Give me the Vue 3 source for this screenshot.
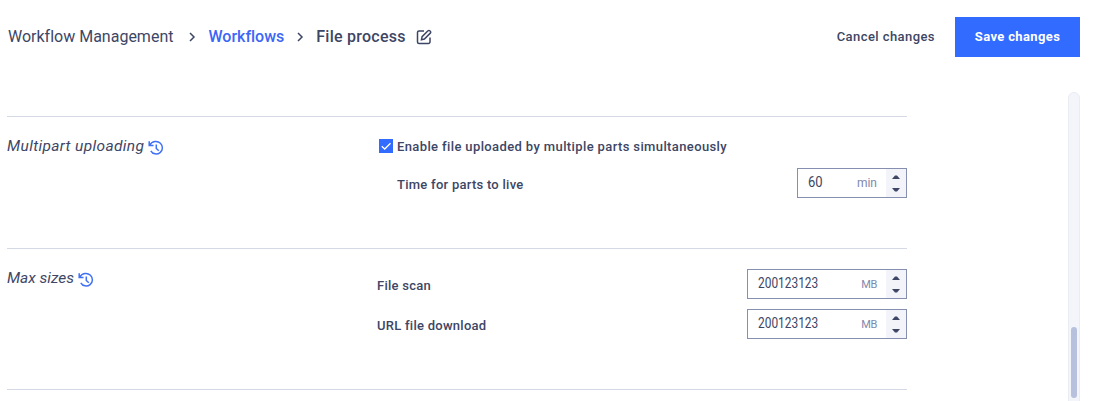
<template>
  <div class="page">
    <header class="header">
      <nav class="breadcrumbs">
        <span class="crumb">Workflow Management</span>
        <svg class="chevron" viewBox="0 0 8 10"><path d="M2 1l4 4-4 4" /></svg>
        <a class="crumb crumb-link" href="#">Workflows</a>
        <svg class="chevron" viewBox="0 0 8 10"><path d="M2 1l4 4-4 4" /></svg>
        <span class="crumb crumb-current">File process</span>
        <svg class="edit-icon" viewBox="0 0 16 16">
          <path d="M8 2H3a1.500 1.500 0 0 0-1.500 1.500v9.500A1.500 1.500 0 0 0 3 14.500h9.500A1.500 1.500 0 0 0 14 13V8.500" />
          <path d="M5.500 10.700l.6-3L12 1.800a1.300 1.300 0 0 1 1.900 0l.4.4a1.300 1.300 0 0 1 0 1.900L8.400 10z" />
        </svg>
      </nav>
      <button class="cancel-button">Cancel changes</button>
      <button class="save-button">Save changes</button>
    </header>

    <main class="content">
      <div class="sections">
        <section v-for="section in sections" :key="section.title" class="section" :class="section.name">
          <h2 class="section-title">
            <span>{{ section.title }}</span>
            <svg class="history-icon" viewBox="0 0 16 16">
              <path d="M1.500 5.600C4 .6 9.600.7 12.400 3.200a6.200 6.200 0 1 1-9.600 7.600" />
              <path d="M1.200 1.300v4.300h4.300" />
              <path d="M8.300 4.500v4l2.500 2.200" />
            </svg>
          </h2>
          <div class="fields">
            <label v-if="section.toggle" class="checkbox-row">
              <span class="checkbox">
                <svg viewBox="0 0 14 14"><path d="M2.800 7.200l2.900 2.800L11.500 4.200" /></svg>
              </span>
              <span class="toggle-label">{{ section.toggle }}</span>
            </label>
            <div v-for="field in section.fields" :key="field.label" class="field">
              <span class="field-label">{{ field.label }}</span>
              <div class="number-input">
                <span class="value">{{ field.value }}</span>
                <span class="unit">{{ field.unit }}</span>
                <span class="spinner">
                  <svg viewBox="0 0 8 4" @click="field.value++"><path d="M0 4l3-3.500h2L8 4z" /></svg>
                  <svg viewBox="0 0 8 4" @click="field.value--"><path d="M0 0l3 3.500h2L8 0z" /></svg>
                </span>
              </div>
            </div>
          </div>
        </section>
        <hr class="end-line" />
      </div>
      <div class="scrollbar"><div class="thumb"></div></div>
    </main>
  </div>
</template>

<script setup>
import { ref } from 'vue';

const sections = ref([
  {
    name: 'multipart',
    title: 'Multipart uploading',
    toggle: 'Enable file uploaded by multiple parts simultaneously',
    fields: [{ label: 'Time for parts to live', value: 60, unit: 'min' }],
  },
  {
    name: 'sizes',
    title: 'Max sizes',
    fields: [
      { label: 'File scan', value: 200123123, unit: 'MB' },
      { label: 'URL file download', value: 200123123, unit: 'MB' },
    ],
  },
]);
</script>

<style>
body {
  overflow: hidden;
  background: #fff;
}
</style>

<style scoped>
.page {
  box-sizing: border-box;
  display: flex;
  flex-direction: column;
  width: 1093px;
  height: 401px;
  overflow: hidden;
  color: #3d4665;
  font-family: Roboto, "Liberation Sans", sans-serif;
  font-size: 13px;
}

svg {
  flex: none;
  fill: none;
  stroke: currentColor;
}

.header {
  display: flex;
  flex: none;
  align-items: center;
  height: 40px;
  padding: 17px 13px 0 8px;
}

.breadcrumbs {
  display: flex;
  flex: 1;
  align-items: center;
  font-size: 16px;
  font-variant-ligatures: none;
  line-height: 20px;
  white-space: nowrap;
}

.crumb-link {
  color: #3c66f5;
  font-weight: 500;
  text-decoration: none;
}

.crumb-current {
  font-weight: 500;
  letter-spacing: 0.25px;
}

.chevron {
  width: 8px;
  height: 10px;
  margin: 0 12px 0 15px;
  stroke-width: 1.5;
}

.crumb-link + .chevron {
  margin-left: 12px;
}

.edit-icon {
  width: 16px;
  height: 16px;
  margin-left: 10px;
  stroke-width: 1.5;
}

button {
  height: 40px;
  padding: 0;
  border: none;
  background: none;
  color: inherit;
  font: 500 13px/40px Roboto, "Liberation Sans", sans-serif;
  white-space: nowrap;
  cursor: pointer;
}

.cancel-button {
  margin-right: 20px;
  letter-spacing: 0.43px;
}

.save-button {
  width: 125px;
  background: #316bff;
  color: #fff;
  font-weight: 700;
  letter-spacing: 0.36px;
}

.content {
  display: flex;
  flex: 1;
  justify-content: space-between;
  padding: 35px 13px 0 7px;
}

.sections {
  width: 900px;
  padding-top: 24px;
}

.section {
  box-sizing: border-box;
  display: flex;
  border-top: 1px solid #d5d8e5;
}

.multipart {
  height: 132px;
}

.sizes {
  height: 141px;
}

.section-title {
  display: flex;
  width: 370px;
  height: 20px;
  margin: 19px 0 0;
  font-size: 15.5px;
  font-style: italic;
  font-weight: 400;
  letter-spacing: 0;
  line-height: 20px;
  white-space: nowrap;
}

.multipart .section-title {
  letter-spacing: 0.36px;
}

.history-icon {
  width: 16px;
  height: 16px;
  margin: 4px 0 0 4px;
  color: #3f70f5;
  stroke-width: 1.5;
}

.fields {
  flex: 1;
  padding-top: 20px;
}

.checkbox-row {
  display: flex;
  align-items: center;
  height: 18px;
  margin-left: 2px;
}

.checkbox {
  width: 14px;
  height: 14px;
  margin-right: 4px;
  background: #316bff;
  color: #fff;
}

.checkbox svg {
  display: block;
  stroke-width: 1.3;
}

.toggle-label,
.field-label {
  font-weight: 500;
  letter-spacing: 0.26px;
  white-space: nowrap;
}

.toggle-label {
  letter-spacing: 0.38px;
}

.field {
  display: flex;
  align-items: center;
  justify-content: space-between;
  height: 30px;
  margin-bottom: 10px;
}

.multipart .field {
  margin-top: 13px;
  padding-left: 20px;
}

.field-label {
  padding-top: 2px;
}

.number-input {
  box-sizing: border-box;
  display: flex;
  align-items: center;
  width: 160px;
  height: 30px;
  border: 1px solid #878fb0;
}

.multipart .number-input {
  width: 110px;
}

.value {
  flex: 1;
  padding: 0 0 2px 10px;
  font-size: 14px;
  transform: scaleX(0.85);
  transform-origin: 10px 50%;
}

.multipart .value {
  transform: scaleX(0.93);
}

.unit {
  margin-right: 9px;
  color: #7e88ad;
  font-size: 11px;
  letter-spacing: -0.3px;
}

.multipart .unit {
  font-size: 12px;
  letter-spacing: 0;
}

.spinner {
  display: flex;
  flex-direction: column;
  align-items: center;
  justify-content: center;
  gap: 9px;
  width: 20px;
  height: 28px;
  background: #f3f4f9;
}

.spinner svg {
  width: 8px;
  height: 4px;
  fill: #3d4665;
  stroke: none;
}

.end-line {
  margin: 0;
  border: none;
  border-top: 1px solid #d5d8e5;
}

.scrollbar {
  box-sizing: border-box;
  width: 12px;
  height: 330px;
  padding: 234px 2px 0;
  border: 1px solid #eaecf4;
  border-radius: 6px;
  background: #f4f5fa;
}

.thumb {
  width: 6px;
  height: 71px;
  border-radius: 3px;
  background: #b7c0dc;
}
</style>
